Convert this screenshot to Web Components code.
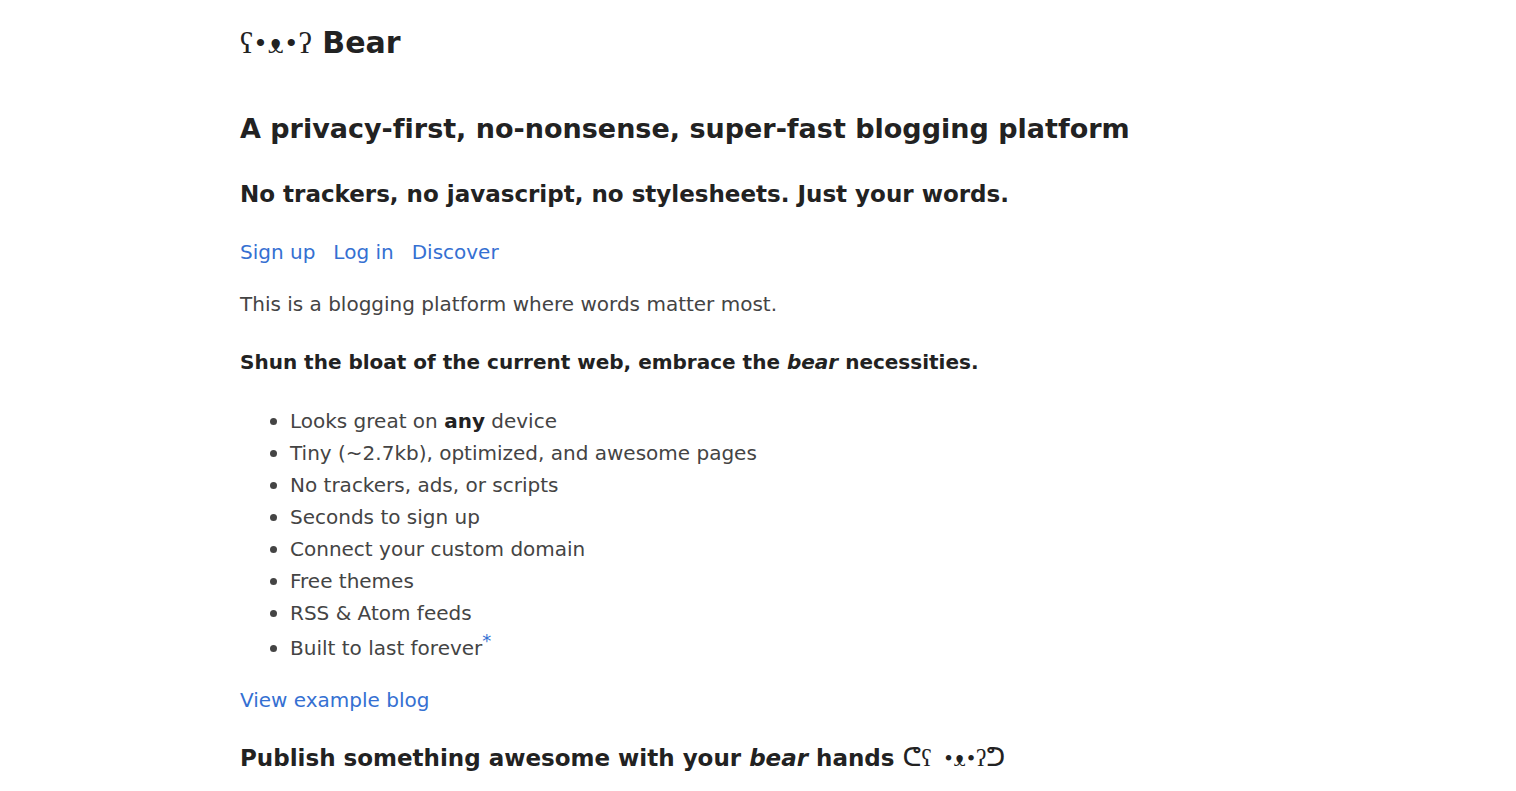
<!DOCTYPE html>
<html lang="en"><head><meta charset="utf-8"><meta name="viewport" content="width=device-width, initial-scale=1"><title>Bear</title>
<style>body{margin:0;background:#fff;color:#444;font-family:Verdana,"DejaVu Sans",sans-serif;font-size:20px;line-height:32px;font-variant-ligatures:none}</style></head>
<body><bear-page></bear-page>
<script>
class BearLink extends HTMLElement{
 constructor(){super();this.attachShadow({mode:"open"}).innerHTML=`<style>:host{display:inline}a{color:#3570d2;text-decoration:none}</style><a href="${this.getAttribute("to")}"><slot></slot></a>`;}
}
class BearFace extends HTMLElement{
 constructor(){super();const arms=this.hasAttribute("arms");
 this.attachShadow({mode:"open"}).innerHTML=`<style>:host{display:inline;font-family:"Liberation Serif","DejaVu Sans",serif;font-weight:normal;line-height:1}
.eye{margin:0 2px}:host([arms]) .eye{margin:0 1px}.arm{font-size:26px;line-height:1}.gap{margin-right:6px}</style>${arms?'<span class="arm">ᕦ</span>':''}ʕ${arms?'<span class="gap"> </span>':''}<span class="eye">•</span>ᴥ<span class="eye">•</span>ʔ${arms?'<span class="arm">ᕤ</span>':''}`;}
}
class BearFeatures extends HTMLElement{
 constructor(){super();this.attachShadow({mode:"open"}).innerHTML=`<style>:host{display:block}ul{margin:0;padding:0 0 0 50px;list-style:none}
li::before{content:"";display:inline-block;width:7px;height:7px;border-radius:50%;background:currentColor;margin:0 13px 0 -20px;vertical-align:3px}
strong{color:#222}sup{font-size:18px;line-height:24px}</style>
<ul><li>Looks great on <strong>any</strong> device</li><li>Tiny (~2.7kb), optimized, and awesome pages</li><li>No trackers, ads, or scripts</li><li>Seconds to sign up</li><li>Connect your custom domain</li><li>Free themes</li><li>RSS &amp; Atom feeds</li><li>Built to last forever<sup><bear-link to="#forever">*</bear-link></sup></li></ul>`;}
}
class BearPage extends HTMLElement{
 constructor(){super();this.attachShadow({mode:"open"}).innerHTML=`<style>
:host{display:block;max-width:1036px;margin:0 auto;padding:24px 20px}
h1,h2,h3,h4{margin:0;color:#222;font-weight:bold}
h1{font-size:30px;line-height:38px}h2{font-size:27px;line-height:34px;margin-top:50px}
h3{font-size:23px;line-height:32px;margin-top:32px}h4{font-size:20px;line-height:32px;margin-top:26px}
p{margin:20px 0 0}p+h3{margin-top:26px}nav{display:flex;gap:18px;margin-top:26px}bear-features{margin-top:27px}
</style><header><h1><bear-face></bear-face> Bear</h1></header><main><h2>A privacy-first, no-nonsense, super-fast blogging platform</h2><h3>No trackers, no javascript, no stylesheets. Just your words.</h3>
<nav><bear-link to="#signup">Sign up</bear-link><bear-link to="#login">Log in</bear-link><bear-link to="#discover">Discover</bear-link></nav>
<p>This is a blogging platform where words matter most.</p><h4>Shun the bloat of the current web, embrace the <em>bear</em> necessities.</h4>
<bear-features></bear-features><p><bear-link to="#example">View example blog</bear-link></p><h3>Publish something awesome with your <em>bear</em> hands <bear-face arms></bear-face></h3></main>`;}
}
customElements.define("bear-link",BearLink);customElements.define("bear-face",BearFace);customElements.define("bear-features",BearFeatures);customElements.define("bear-page",BearPage);
</script></body></html>
